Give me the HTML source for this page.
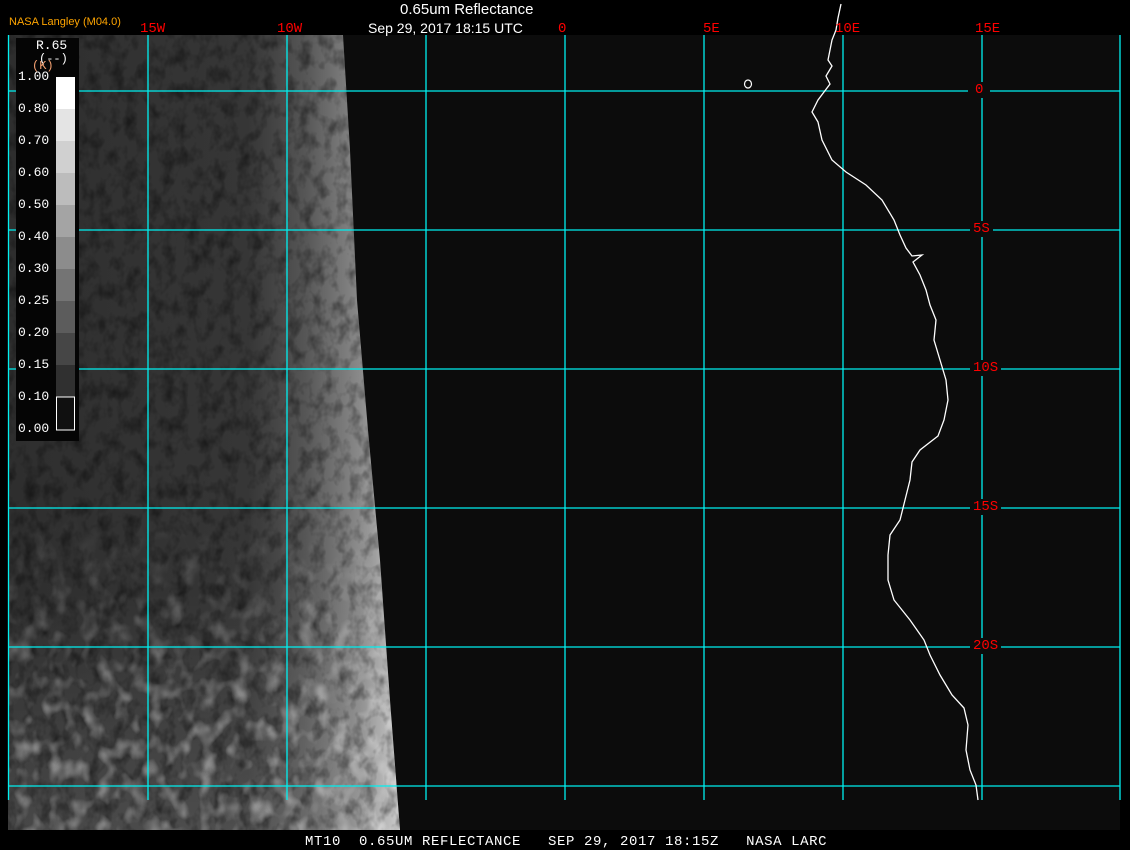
<!DOCTYPE html>
<html><head><style>
body{margin:0;background:#000;width:1130px;height:850px;overflow:hidden;position:relative;font-family:"Liberation Sans",sans-serif}
.t{position:absolute;color:#fff;font-size:14px;white-space:nowrap}
.m{position:absolute;font-family:"Liberation Mono",monospace;white-space:pre}
</style></head><body>
<svg width="1130" height="850" style="position:absolute;left:0;top:0">
<defs>
<filter id="n" x="0" y="0" width="100%" height="100%">
<feTurbulence type="fractalNoise" baseFrequency="0.08 0.06" numOctaves="3" seed="4"/>
<feColorMatrix type="matrix" values="0 0 0 0 0  0 0 0 0 0  0 0 0 0 0  -2.2 0 0 0 1.25"/>
</filter>
<filter id="w" x="0" y="0" width="100%" height="100%">
<feTurbulence type="fractalNoise" baseFrequency="0.06 0.05" numOctaves="2" seed="9"/>
<feColorMatrix type="matrix" values="0 0 0 0 1  0 0 0 0 1  0 0 0 0 1  2.5 0 0 0 -1.2"/>
</filter>
<linearGradient id="g" x1="0" y1="0" x2="1" y2="0">
<stop offset="0" stop-color="#2e2e2e"/><stop offset="0.6" stop-color="#363636"/><stop offset="0.74" stop-color="#555"/><stop offset="0.88" stop-color="#8a8a8a"/><stop offset="1" stop-color="#d0d0d0"/>
</linearGradient>
<linearGradient id="g2" x1="0" y1="0" x2="0" y2="1">
<stop offset="0" stop-color="#fff" stop-opacity="0"/><stop offset="0.7" stop-color="#fff" stop-opacity="0"/><stop offset="1" stop-color="#fff" stop-opacity="0.12"/>
</linearGradient>
<linearGradient id="mg" x1="0" y1="0" x2="0" y2="1">
<stop offset="0" stop-color="#000"/><stop offset="0.6" stop-color="#000"/><stop offset="0.85" stop-color="#fff"/><stop offset="1" stop-color="#fff"/>
</linearGradient>
<mask id="mk"><rect x="8" y="35" width="400" height="795" fill="url(#mg)"/></mask>
<clipPath id="c"><path d="M8 35 L343 35 L350 150 L357 300 L368 430 L380 560 L390 700 L400 830 L8 830 Z"/></clipPath>
</defs>
<rect x="8" y="35" width="1112" height="795" fill="#0c0c0c"/>
<g clip-path="url(#c)">
<rect x="8" y="35" width="400" height="795" fill="url(#g)"/>
<rect x="8" y="35" width="400" height="795" fill="url(#g2)"/>
<rect x="8" y="35" width="400" height="795" fill="#000" filter="url(#n)" opacity="0.45"/>
<rect x="8" y="35" width="400" height="795" fill="#000" filter="url(#w)" opacity="0.45" mask="url(#mk)"/>
</g>
<g stroke="#00f0f0" stroke-width="1.3">
<line x1="8.5" y1="35" x2="8.5" y2="800"/><line x1="148" y1="35" x2="148" y2="800"/><line x1="287" y1="35" x2="287" y2="800"/><line x1="426" y1="35" x2="426" y2="800"/><line x1="565" y1="35" x2="565" y2="800"/><line x1="704" y1="35" x2="704" y2="800"/><line x1="843" y1="35" x2="843" y2="800"/><line x1="982" y1="35" x2="982" y2="800"/><line x1="1120" y1="35" x2="1120" y2="800"/>
<line x1="8" y1="91" x2="1120" y2="91"/><line x1="8" y1="230" x2="1120" y2="230"/><line x1="8" y1="369" x2="1120" y2="369"/><line x1="8" y1="508" x2="1120" y2="508"/><line x1="8" y1="647" x2="1120" y2="647"/><line x1="8" y1="786" x2="1120" y2="786"/>
</g>
<polyline fill="none" stroke="#fff" stroke-width="1.3" points="841,4 838,18 836,30 832,40 828,60 832,66 826,76 830,84 824,92 818,100 812,112 818,122 822,140 832,160 846,172 866,185 882,200 894,220 900,235 906,248 912,256 922,255 913,262 920,275 926,290 930,305 936,320 934,340 940,360 946,380 948,400 944,420 938,436 920,450 912,462 910,480 905,500 900,520 890,535 888,555 888,580 894,600 910,620 924,640 930,655 940,675 952,695 964,708 968,725 966,750 970,770 976,785 978,800"/>
<ellipse cx="748" cy="84" rx="3.5" ry="4" fill="none" stroke="#fff" stroke-width="1.2"/>
<rect x="16" y="38" width="63" height="403" fill="#050505"/>
<g>
<rect x="56" y="77" width="19" height="32" fill="#fff"/>
<rect x="56" y="109" width="19" height="32" fill="#e4e4e4"/>
<rect x="56" y="141" width="19" height="32" fill="#d0d0d0"/>
<rect x="56" y="173" width="19" height="32" fill="#bcbcbc"/>
<rect x="56" y="205" width="19" height="32" fill="#a4a4a4"/>
<rect x="56" y="237" width="19" height="32" fill="#8c8c8c"/>
<rect x="56" y="269" width="19" height="32" fill="#747474"/>
<rect x="56" y="301" width="19" height="32" fill="#5c5c5c"/>
<rect x="56" y="333" width="19" height="32" fill="#464646"/>
<rect x="56" y="365" width="19" height="32" fill="#303030"/>
<rect x="56.5" y="397" width="18" height="33" fill="#101010" stroke="#fff" stroke-width="1"/>
</g>
<rect x="0" y="830" width="1130" height="20" fill="#000"/>
</svg>
<div class="t" style="left:400px;top:1px;font-size:15px">0.65um Reflectance</div>
<div class="t" style="left:368px;top:20px;font-size:14px">Sep 29, 2017 18:15 UTC</div>
<div class="t" style="left:9px;top:16px;font-size:11px;color:#ffa500">NASA Langley (M04.0)</div>
<div class="m" style="color:#f00;font-size:14px;top:21px;left:140px">15W</div>
<div class="m" style="color:#f00;font-size:14px;top:21px;left:277px">10W</div>
<div class="m" style="color:#f00;font-size:14px;top:21px;left:558px">0</div>
<div class="m" style="color:#f00;font-size:14px;top:21px;left:703px">5E</div>
<div class="m" style="color:#f00;font-size:14px;top:21px;left:835px">10E</div>
<div class="m" style="color:#f00;font-size:14px;top:21px;left:975px">15E</div>
<div class="m" style="color:#f00;font-size:14px;top:82px;left:968px;background:#0c0c0c;padding:0 7px">0</div>
<div class="m" style="color:#f00;font-size:14px;top:221px;left:970px;background:#0c0c0c;padding:0 3px">5S</div>
<div class="m" style="color:#f00;font-size:14px;top:360px;left:970px;background:#0c0c0c;padding:0 3px">10S</div>
<div class="m" style="color:#f00;font-size:14px;top:499px;left:970px;background:#0c0c0c;padding:0 3px">15S</div>
<div class="m" style="color:#f00;font-size:14px;top:638px;left:970px;background:#0c0c0c;padding:0 3px">20S</div>
<div class="m" style="color:#fff;font-size:13px;top:38px;left:36px">R.65</div>
<div class="m" style="color:#fff;font-size:12px;top:52px;left:39px">(--)</div>
<div class="m" style="color:#f4a070;font-size:12px;top:59px;left:32px">(K)</div>
<div class="m" style="color:#fff;font-size:13px;left:18px;top:61px;line-height:32px">1.00
0.80
0.70
0.60
0.50
0.40
0.30
0.25
0.20
0.15
0.10
0.00</div>
<div class="m" style="color:#fff;font-size:14px;top:834px;left:305px;letter-spacing:0.6px">MT10  0.65UM REFLECTANCE   SEP 29, 2017 18:15Z   NASA LARC</div>
</body></html>
